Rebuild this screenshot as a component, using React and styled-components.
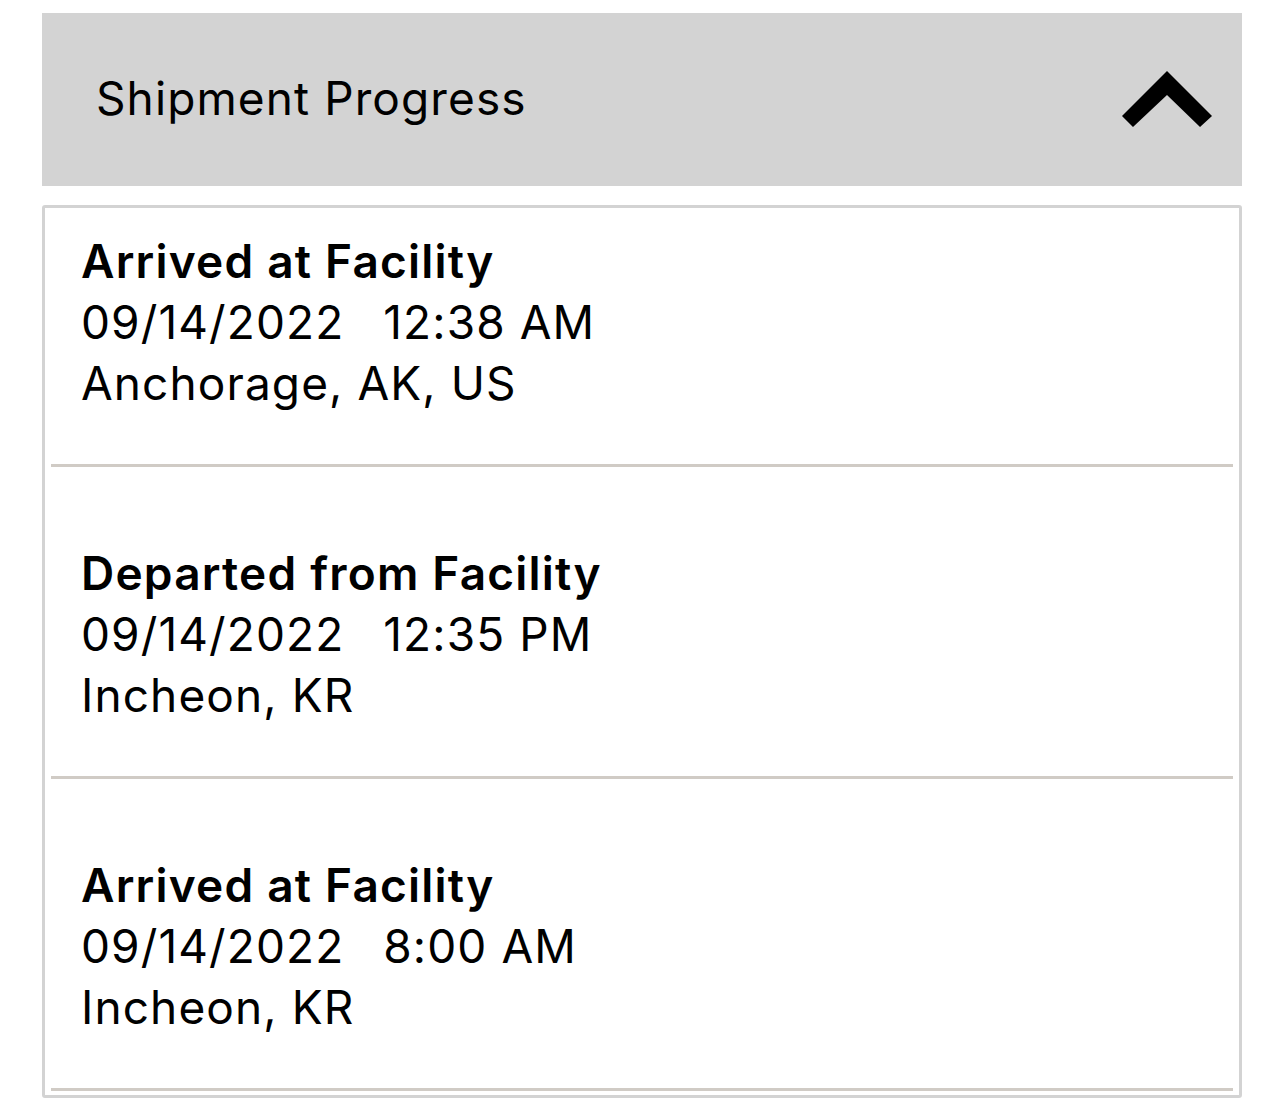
import styled, { createGlobalStyle } from "styled-components";

const GlobalStyle = createGlobalStyle`
  html, body {
    margin: 0;
    padding: 0;
    background: #ffffff;
  }
  body {
    font-family: Inter, "Noto Sans", "Liberation Sans", sans-serif;
    color: #000000;
  }
`;

const Page = styled.div`
  padding: 13px 42px 0 42px;
  display: flex;
  flex-direction: column;
  gap: 19px;
  height: 1098px;
  box-sizing: border-box;
  overflow: hidden;
`;

const Header = styled.div`
  height: 173px;
  background-color: #d3d3d3;
  display: flex;
  flex-direction: row;
  align-items: center;
  justify-content: space-between;
  padding: 0 30px 0 54px;
  box-sizing: border-box;
  flex-shrink: 0;
`;

const HeaderTitle = styled.div`
  font-size: 46px;
  font-weight: 400;
  letter-spacing: 1.1px;
  margin-top: -4px;
`;

const Chevron = styled.svg`
  width: 90px;
  height: 56px;
  display: block;
  margin-top: -2px;
`;

const List = styled.div`
  border: 3px solid #d3d3d3;
  border-radius: 3px;
  flex: 1;
  display: flex;
  flex-direction: column;
`;

const Item = styled.div`
  margin: 0 6px;
  padding: 76px 30px 50px 30px;
  border-bottom: 3px solid #d0cbc5;
  display: flex;
  flex-direction: column;
  font-size: 46px;
  line-height: 61px;
  &:first-child {
    padding-top: 23px;
  }
`;

const Status = styled.div`
  font-weight: 600;
  letter-spacing: 1.2px;
`;

const Line = styled.div`
  font-weight: 400;
  letter-spacing: 1.1px;
`;

const Time = styled.span`
  margin-left: 39px;
`;

const events = [
  { status: "Arrived at Facility", date: "09/14/2022", time: "12:38 AM", place: "Anchorage, AK, US" },
  { status: "Departed from Facility", date: "09/14/2022", time: "12:35 PM", place: "Incheon, KR" },
  { status: "Arrived at Facility", date: "09/14/2022", time: "8:00 AM", place: "Incheon, KR" },
];

const App = () => {
  return (
    <>
      <GlobalStyle />
      <Page>
        <Header>
          <HeaderTitle>Shipment Progress</HeaderTitle>
          <Chevron viewBox="0 0 90 56">
            <polygon points="45,0 90,45 78,56 45,24 11,56 0,45" fill="#000" />
          </Chevron>
        </Header>
        <List>
          {events.map((e, i) => (
            <Item key={i}>
              <Status>{e.status}</Status>
              <Line>
                {e.date}
                <Time>{e.time}</Time>
              </Line>
              <Line>{e.place}</Line>
            </Item>
          ))}
        </List>
      </Page>
    </>
  );
};

export default App;
